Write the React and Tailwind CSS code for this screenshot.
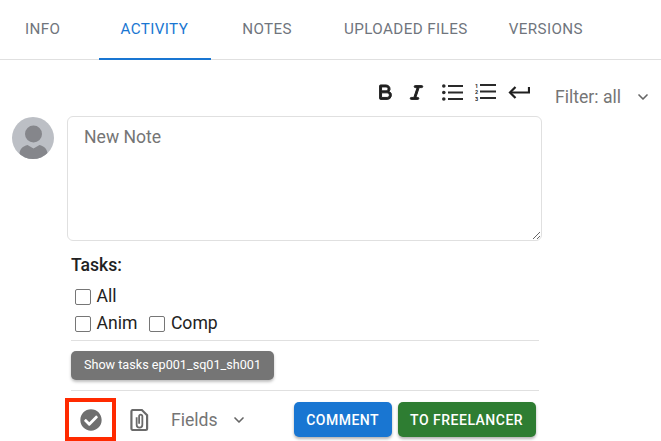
import { FaCheckCircle } from "react-icons/fa";
import { PiTextBBold, PiTextItalicBold } from "react-icons/pi";
import { ChevronDown } from "lucide-react";

function Avatar() {
  return (
    <svg width="42" height="42" viewBox="0 0 42 42" className="shrink-0">
      <defs>
        <clipPath id="avatar-clip">
          <circle cx="21" cy="21" r="21" />
        </clipPath>
      </defs>
      <circle cx="21" cy="21" r="21" fill="#bcbfc5" />
      <g clipPath="url(#avatar-clip)" fill="#85868b">
        <circle cx="21.5" cy="17" r="8.5" />
        <path d="M7.5 42v-5c0-5 3.5-8 8-9l6 3.5 6-3.5c4.500 1 8 4 8 9v5z" />
      </g>
    </svg>
  );
}

function ClipFile() {
  return (
    <svg width="19" height="24" viewBox="0 0 20 24" fill="none" stroke="#6a6a6a" strokeWidth="2.300">
      <path d="M2.500 1.500h10l5.500 5.500v14a1.500 1.500 0 0 1-1.500 1.500h-14a1.500 1.500 0 0 1-1-1.500v-18a1.500 1.500 0 0 1 1-1.500z" />
      <path d="M7 9v8a3 3 0 0 0 6 0V8a1.700 1.700 0 0 0-3.400 0v8" strokeWidth="1.900" />
    </svg>
  );
}

function BulletList() {
  return (
    <svg width="21" height="17" viewBox="0 0 21 17" fill="#2a2a2a">
      <circle cx="1.800" cy="2" r="1.800" />
      <circle cx="1.800" cy="8.500" r="1.800" />
      <circle cx="1.800" cy="15" r="1.800" />
      <rect x="6" y="1" width="15" height="2" />
      <rect x="6" y="7.500" width="15" height="2" />
      <rect x="6" y="14" width="15" height="2" />
    </svg>
  );
}

function NumberList() {
  return (
    <svg width="21" height="19" viewBox="0 0 21 19" fill="#2a2a2a">
      <text x="0" y="5.500" fontSize="5.500" fontWeight="700" fontFamily="Roboto, sans-serif">1</text>
      <text x="0" y="12" fontSize="5.500" fontWeight="700" fontFamily="Roboto, sans-serif">2</text>
      <text x="0" y="18.500" fontSize="5.500" fontWeight="700" fontFamily="Roboto, sans-serif">3</text>
      <rect x="5" y="2" width="16" height="2" />
      <rect x="5" y="8.500" width="16" height="2" />
      <rect x="5" y="15" width="16" height="2" />
    </svg>
  );
}

function ReturnArrow() {
  return (
    <svg width="22" height="16" viewBox="0 0 22 16" fill="none" stroke="#1f1f1f" strokeWidth="2.200">
      <path d="M21 2v5.500H2" />
      <path d="M7.500 2 2 7.500 7.500 13" />
    </svg>
  );
}

function Task({ label }) {
  return (
    <label className="flex items-center gap-[5.5px]">
      <span className="w-4 h-4 border-[1.5px] border-[#767676] rounded-[2px] bg-white" />
      <span>{label}</span>
    </label>
  );
}

export default function App() {
  return (
    <div className="w-[661px] h-[441px] overflow-hidden bg-white font-['Roboto',sans-serif]">
      {/* Tabs */}
      <div className="h-[60px] border-b border-[#e0e0e0] flex text-[15.2px] tracking-[0.4px] text-[#70757d]">
        <div className="pl-[25px] pr-[39px] pt-[18px]">INFO</div>
        <div className="pl-[21px] pr-[23px] pt-[18px] h-[60px] border-b-2 border-[#1976d2] text-[#1976d2]">ACTIVITY</div>
        <div className="pl-[31px] pr-[26px] pt-[18px]">NOTES</div>
        <div className="pl-[26px] pr-[20px] pt-[18px]">UPLOADED FILES</div>
        <div className="pl-[21px] pt-[18px]">VERSIONS</div>
      </div>

      <div className="flex">
        <div className="w-[542px] shrink-0">
          {/* Editor toolbar */}
          <div className="h-[56px] flex items-start pl-[374px] pt-[22px]">
            <PiTextBBold size={21} color="#1f1f1f" strokeWidth={12} />
            <PiTextItalicBold size={21} color="#1f1f1f" strokeWidth={12} className="ml-[11px]" />
            <div className="ml-[15px] mt-[2px]">
              <BulletList />
            </div>
            <div className="ml-[12px]">
              <NumberList />
            </div>
            <div className="ml-[12px] mt-[3px]">
              <ReturnArrow />
            </div>
          </div>

          <div className="flex pl-3 pt-[1px] gap-[13px]">
            <Avatar />
            <div className="flex-1">
              <textarea
                placeholder="New Note"
                className="block w-full h-[125px] -mt-[1px] border border-[#e0e0e0] rounded-[6px] px-4 py-[7px] text-[17.6px] placeholder:text-[#757575] outline-none"
              />

              {/* Tasks */}
              <div className="ml-1 w-[468px]">
                <div className="mt-[15px] text-[17.6px] font-medium text-[#222] leading-[19px]">Tasks:</div>
                <div className="mt-[8px] pl-1 text-[17.6px] text-[#222] leading-[27px]">
                  <Task label="All" />
                  <div className="flex gap-[12px]">
                    <Task label="Anim" />
                    <Task label="Comp" />
                  </div>
                </div>
                <div className="mt-[3px] border-t border-[#e0e0e0]" />
                <div className="mt-[10px] w-[203px] h-[29px] rounded-[5px] bg-[#757575] text-white text-[12.65px] flex items-center justify-center shadow-[0_2px_3px_rgba(0,0,0,0.25)]">
                  Show tasks ep001_sq01_sh001
                </div>
                <div className="mt-[10px] border-t border-[#e0e0e0]" />
              </div>

              {/* Bottom actions */}
              <div className="flex items-start mt-[7px] -ml-[2px]">
                <div className="w-[51px] h-[43px] border-[4px] border-[#ff2a00] flex items-center justify-center shrink-0">
                  <FaCheckCircle size={22} color="#6f6f6f" />
                </div>
                <div className="ml-[14px] mt-[10px]">
                  <ClipFile />
                </div>
                <div className="ml-[22px] mt-[10px] flex items-center text-[17.6px] text-[#757575] leading-6">
                  Fields
                  <ChevronDown size={16} strokeWidth={2.500} color="#666" className="ml-[13px]" />
                </div>
                <button className="ml-[47px] mt-[4px] w-[98px] h-[35px] rounded-[5px] bg-[#1976d2] text-white text-sm font-medium tracking-[0.5px] shadow-[0_2px_3px_rgba(0,0,0,0.3)]">
                  COMMENT
                </button>
                <button className="ml-[6px] mt-[4px] w-[138px] h-[35px] rounded-[5px] bg-[#2e7d32] text-white text-sm font-medium tracking-[0.5px] shadow-[0_2px_3px_rgba(0,0,0,0.3)] shrink-0">
                  TO FREELANCER
                </button>
              </div>
            </div>
          </div>
        </div>

        {/* Filter */}
        <div className="pl-[13px] pt-[25px] flex items-start text-[17.6px] text-[#757575] leading-6">
          Filter: all
          <ChevronDown size={16} strokeWidth={2.500} color="#666" className="ml-[14px] mt-1" />
        </div>
      </div>
    </div>
  );
}
